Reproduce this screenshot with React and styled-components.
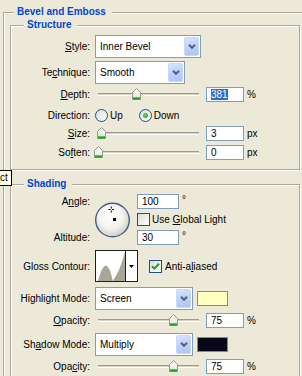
import React from 'react'
import styled, { createGlobalStyle } from 'styled-components'

const GlobalStyle = createGlobalStyle`
  html, body {
    margin: 0;
    padding: 0;
    width: 302px;
    height: 376px;
    overflow: hidden;
    background: #ECE9D8;
  }
  body {
    font-family: "Liberation Sans", Arial, sans-serif;
    font-size: 10px;
    color: #000;
  }
`

const Page = styled.div`
  position: relative;
  width: 302px;
  height: 376px;
  overflow: hidden;
`

// etched XP group box
const Group = styled.fieldset`
  box-sizing: border-box;
  width: ${p => p.$w}px;
  min-width: 0;
  margin: ${p => p.$margin || 0};
  padding: ${p => p.$pad || 0};
  border: 1px solid #ACA899;
  box-shadow: inset 1px 1px 0 #fff, 1px 1px 0 #fff;
`

const Legend = styled.legend`
  height: 12px;
  line-height: 12px;
  margin-left: ${p => p.$indent}px;
  padding: 0 6px 0 3px;
  background: #ECE9D8;
  color: #0046D5;
  font-weight: bold;
  font-size: 10px;
`

const Row = styled.div`
  display: flex;
  align-items: center;
  height: ${p => p.$h}px;
  margin-top: ${p => p.$mt || 0}px;
`

const Label = styled.div`
  flex: none;
  width: 79px;
  margin-right: 5px;
  text-align: right;
  white-space: nowrap;
`

const Key = styled.span`
  text-decoration: underline;
`

const SelectBox = styled.div`
  box-sizing: border-box;
  flex: none;
  display: flex;
  align-items: center;
  width: ${p => p.$w}px;
  height: 23px;
  padding: 1px;
  border: 1px solid #7F9DB9;
  background: #fff;
`

const SelectText = styled.span`
  flex: 1;
  padding-left: 3px;
  white-space: nowrap;
`

const DropButton = styled.span`
  box-sizing: border-box;
  display: flex;
  align-items: center;
  justify-content: center;
  width: 15px;
  height: 19px;
  border: 1px solid #C9D7FB;
  border-radius: 2px;
  background: linear-gradient(160deg, #D8E4FE 0%, #BCCFF9 55%, #AFC4F5 100%);
`

const SliderWrap = styled.div`
  position: relative;
  flex: none;
  width: 101px;
  height: 15px;
  margin-left: 3px;
  margin-right: 7px;
`

const Track = styled.div`
  position: absolute;
  left: 0;
  right: 0;
  top: 6px;
  height: 3px;
  box-sizing: border-box;
  border-top: 1px solid #9D9B90;
  border-bottom: 1px solid #fff;
  background: #D6D3C4;
`

const Thumb = styled.svg`
  position: absolute;
  top: 1px;
`

const NumBox = styled.div`
  box-sizing: border-box;
  flex: none;
  width: ${p => p.$w || 38}px;
  height: 15px;
  padding-left: 4px;
  border: 1px solid #7F9DB9;
  background: #fff;
  line-height: 13px;
  white-space: nowrap;
`

const Selected = styled.span`
  background: #316AC5;
  color: #fff;
`

const Unit = styled.span`
  margin-left: 3px;
  align-self: ${p => (p.$top ? 'flex-start' : 'center')};
  line-height: ${p => (p.$top ? '12px' : 'normal')};
`

const Radio = styled.span`
  box-sizing: border-box;
  flex: none;
  display: flex;
  align-items: center;
  justify-content: center;
  width: 13px;
  height: 13px;
  margin-left: ${p => p.$ml || 0}px;
  border: 1px solid #1C5180;
  border-radius: 50%;
  background: linear-gradient(135deg, #DCDCD4, #fff);
  &::after {
    content: '';
    width: 5px;
    height: 5px;
    border-radius: 50%;
    background: ${p => (p.$on ? 'radial-gradient(circle at 40% 40%, #5EDB5E, #1E9E1E)' : 'transparent')};
  }
`

const Check = styled.span`
  box-sizing: border-box;
  flex: none;
  display: flex;
  align-items: center;
  justify-content: center;
  width: 13px;
  height: 13px;
  margin-left: ${p => p.$ml || 0}px;
  border: 1px solid #1C5180;
  background: linear-gradient(135deg, #DCDCD4, #fff);
`

const Opt = styled.span`
  margin-left: ${p => p.$ml || 2}px;
  white-space: nowrap;
`

const Swatch = styled.div`
  box-sizing: border-box;
  flex: none;
  width: 31px;
  height: 15px;
  margin-left: 4px;
  border: 1px solid #8C8A80;
  background: ${p => p.$c};
`

const AngleGrid = styled.div`
  display: grid;
  grid-template-columns: 84px 42px auto;
  grid-template-rows: 15px 13px 15px;
  row-gap: 4px;
`

const Cell = styled.div`
  grid-column: ${p => p.$col};
  grid-row: ${p => p.$row};
  display: flex;
  align-items: center;
  justify-content: ${p => (p.$right ? 'flex-end' : 'flex-start')};
  padding-right: ${p => (p.$right ? '5px' : 0)};
  white-space: nowrap;
`

const Dial = styled.svg`
  grid-column: 2;
  grid-row: 1 / span 3;
  align-self: center;
`

const ContourBox = styled.div`
  box-sizing: border-box;
  flex: none;
  display: flex;
  width: 43px;
  height: 32px;
  border: 1px solid #1E1E1E;
  background: #fff;
`

const ContourArrow = styled.div`
  flex: 1;
  display: flex;
  align-items: center;
  justify-content: center;
  border-left: 1px solid #1E1E1E;
`

const Tip = styled.div`
  position: absolute;
  left: 0;
  top: 170px;
  box-sizing: border-box;
  height: 16px;
  padding-right: 3px;
  border: 1px solid #000;
  border-left: none;
  background: #FFFFE1;
  line-height: 14px;
`

function Chevron() {
  return (
    <svg width="8" height="5" viewBox="0 0 8 5">
      <polyline points="1,0.8 4,3.8 7,0.8" fill="none" stroke="#4D6185" strokeWidth="2" />
    </svg>
  )
}

function Select({ w, children }) {
  return (
    <SelectBox $w={w}>
      <SelectText>{children}</SelectText>
      <DropButton>
        <Chevron />
      </DropButton>
    </SelectBox>
  )
}

function Slider({ value }) {
  return (
    <SliderWrap>
      <Track />
      <Thumb width="9" height="12" viewBox="0 0 9 12" style={{ left: value * 101 - 4.5 }}>
        <defs>
          <linearGradient id="thumbFill" x1="0" y1="0" x2="0" y2="1">
            <stop offset="0" stopColor="#fff" />
            <stop offset="1" stopColor="#E4E3DA" />
          </linearGradient>
        </defs>
        <path d="M0.5 4.5 L4.5 0.5 L8.5 4.5 L8.5 11.5 L0.5 11.5 Z" fill="url(#thumbFill)" stroke="#8E9C8E" />
        <rect x="1" y="9" width="7" height="1" fill="#52C652" />
        <rect x="1" y="10" width="7" height="1.5" fill="#21A121" />
      </Thumb>
    </SliderWrap>
  )
}

function CheckBox({ on, ml }) {
  return (
    <Check $ml={ml}>
      {on && (
        <svg width="9" height="9" viewBox="0 0 9 9">
          <polyline points="1,4.2 3.4,6.6 8,1.8" fill="none" stroke="#21A121" strokeWidth="2" />
        </svg>
      )}
    </Check>
  )
}

export default function App() {
  return (
    <Page>
      <GlobalStyle />
      <Group $w={330} $margin="6px 0 0 3px" $pad="1px 0 0 0">
        <Legend $indent={10}>Bevel and Emboss</Legend>

        <Group $w={290} $margin="0 0 0 6px" $pad="4px 0 9px 0">
          <Legend $indent={13}>Structure</Legend>
          <Row $h={23}>
            <Label><Key>S</Key>tyle:</Label>
            <Select w={106}>Inner Bevel</Select>
          </Row>
          <Row $h={23} $mt={3}>
            <Label>Te<Key>c</Key>hnique:</Label>
            <Select w={90}>Smooth</Select>
          </Row>
          <Row $h={15} $mt={3}>
            <Label><Key>D</Key>epth:</Label>
            <Slider value={0.381} />
            <NumBox><Selected>381</Selected></NumBox>
            <Unit>%</Unit>
          </Row>
          <Row $h={20} $mt={3}>
            <Label>Direction:</Label>
            <Radio />
            <Opt>Up</Opt>
            <Radio $on $ml={16} />
            <Opt>Down</Opt>
          </Row>
          <Row $h={15} $mt={1}>
            <Label><Key>S</Key>ize:</Label>
            <Slider value={0.03} />
            <NumBox>3</NumBox>
            <Unit>px</Unit>
          </Row>
          <Row $h={15} $mt={4}>
            <Label>So<Key>f</Key>ten:</Label>
            <Slider value={0} />
            <NumBox>0</NumBox>
            <Unit>px</Unit>
          </Row>
        </Group>

        <Group $w={290} $margin="8px 0 0 6px" $pad="4px 0 8px 0">
          <Legend $indent={13}>Shading</Legend>
          <AngleGrid>
            <Cell $col={1} $row={1} $right>A<Key>n</Key>gle:</Cell>
            <Dial width="36" height="36" viewBox="0 0 36 36">
              <defs>
                <radialGradient id="dialFill" cx="0.45" cy="0.4" r="0.6">
                  <stop offset="0" stopColor="#fff" />
                  <stop offset="0.6" stopColor="#F3F3EF" />
                  <stop offset="1" stopColor="#CFCFC8" />
                </radialGradient>
              </defs>
              <circle cx="17.5" cy="18" r="16.8" fill="url(#dialFill)" stroke="#4B5B86" strokeWidth="1.4" />
              <path d="M13.5 7.5 H15.5 M17 7.5 H19 M16.3 4.5 V6.5 M16.3 8.5 V10.5" stroke="#000" strokeWidth="1" />
              <rect x="18" y="16" width="3" height="3" fill="#000" />
            </Dial>
            <Cell $col={3} $row={1}>
              <NumBox $w={42}>100</NumBox>
              <Unit $top>°</Unit>
            </Cell>
            <Cell $col={3} $row={2}>
              <CheckBox />
              <Opt>Use <Key>G</Key>lobal Light</Opt>
            </Cell>
            <Cell $col={1} $row={3} $right>Altitude:</Cell>
            <Cell $col={3} $row={3}>
              <NumBox $w={42}>30</NumBox>
              <Unit $top>°</Unit>
            </Cell>
          </AngleGrid>

          <Row $h={32} $mt={5}>
            <Label>Gloss Contour:</Label>
            <ContourBox>
              <svg width="29" height="30" viewBox="0 0 29 30">
                <path d="M2 30 Q6 15 9.8 14.6 Q13.5 14.5 16.8 30 Q24 20 29 1 L29 30 Z" fill="#A9A597" />
              </svg>
              <ContourArrow>
                <svg width="5" height="3" viewBox="0 0 5 3">
                  <path d="M0 0 H5 L2.5 3 Z" fill="#000" />
                </svg>
              </ContourArrow>
            </ContourBox>
            <CheckBox on ml={11} />
            <Opt $ml={3}>Anti-a<Key>l</Key>iased</Opt>
          </Row>

          <Row $h={23} $mt={5}>
            <Label>Highlight Mode:</Label>
            <Select w={98}>Screen</Select>
            <Swatch $c="#FFFFC2" />
          </Row>
          <Row $h={15} $mt={3}>
            <Label><Key>O</Key>pacity:</Label>
            <Slider value={0.75} />
            <NumBox>75</NumBox>
            <Unit>%</Unit>
          </Row>
          <Row $h={23} $mt={5}>
            <Label>Sh<Key>a</Key>dow Mode:</Label>
            <Select w={98}>Multiply</Select>
            <Swatch $c="#08081A" />
          </Row>
          <Row $h={15} $mt={3}>
            <Label>Opa<Key>c</Key>ity:</Label>
            <Slider value={0.75} />
            <NumBox>75</NumBox>
            <Unit>%</Unit>
          </Row>
        </Group>
      </Group>

      <Tip>ct</Tip>
    </Page>
  )
}
